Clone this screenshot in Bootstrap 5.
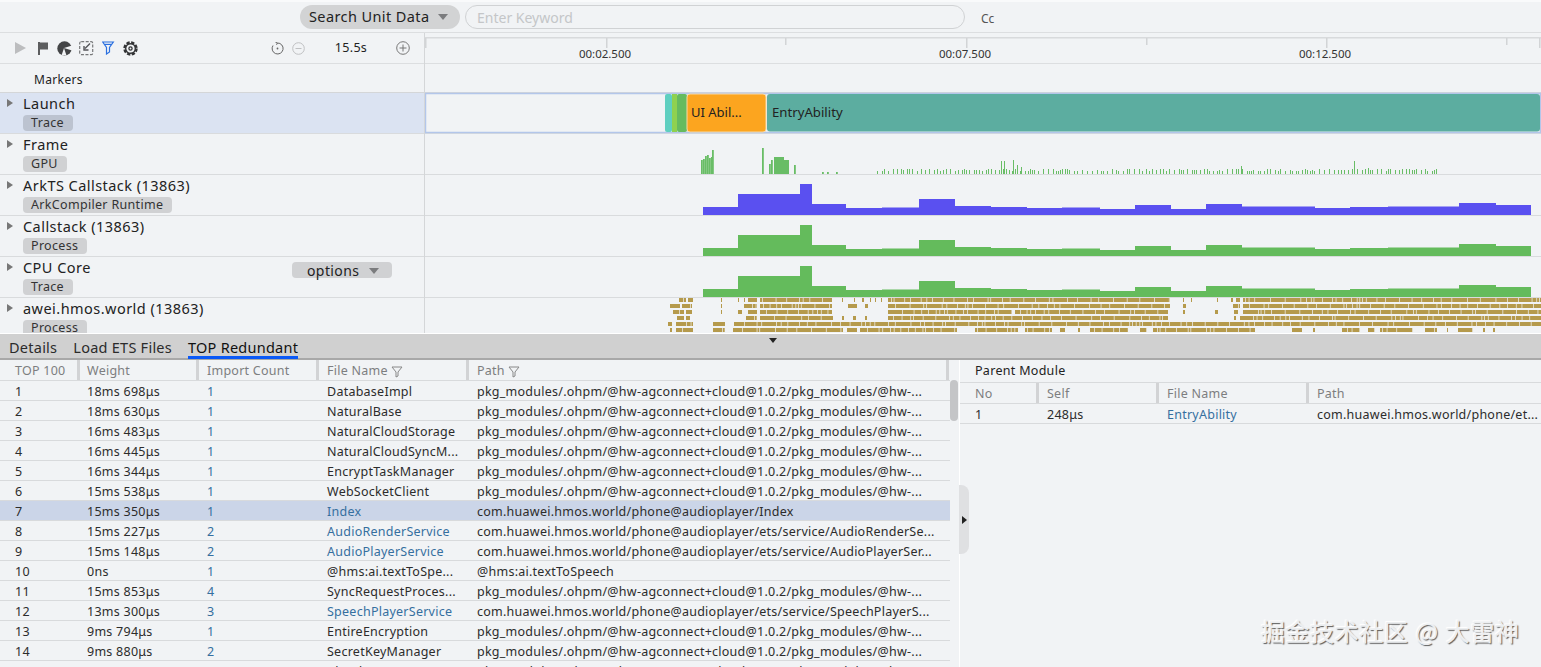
<!DOCTYPE html>
<html lang="en">
<head>
    <meta charset="UTF-8">
    <title>Launch - TOP Redundant</title>
    <link href="https://cdn.jsdelivr.net/npm/bootstrap@5.3.2/dist/css/bootstrap.min.css" rel="stylesheet">
    <style>
        html, body { height: 100%; overflow: hidden; }
        body {
            background: #f1f3f5;
            color: #222;
            font-family: "Noto Sans", "Liberation Sans", sans-serif;
            font-size: 13px;
            width: 1541px;
            height: 667px;
            position: relative;
        }
        .search-bar { height: 33px; border-top: 2px solid #f9fafb; border-bottom: 1px solid #dcdee0; padding-left: 300px; padding-top: 3px; }
        .search-type { width: 160px; height: 24px; background: #d2d3d4; border-radius: 12px; font-size: 14.5px; padding-left: 9px; letter-spacing: .4px; }
        .search-input { width: 500px; height: 24px; margin-left: 5px; border: 1px solid #d0d2d4; border-radius: 12px; padding-left: 11px; color: #c4c6c8; font-size: 14px; }
        .search-cc { margin-left: 16px; color: #555; font-size: 12px; }
        .caret-down { width: 0; height: 0; border-left: 5px solid transparent; border-right: 5px solid transparent; border-top: 6px solid #7b7c7e; }
        .top-area { height: 300px; overflow: hidden; }
        .left-col { width: 425px; flex: none; border-right: 1px solid #d4d6d8; }
        .tool-row { height: 31px; border-bottom: 1px solid #dcdee0; padding-left: 15px; }
        .tool-row svg { display: block; flex: none; }
        .tool-right { padding-right: 14px; }
        .zoom-val { width: 64px; text-align: center; font-size: 12.5px; margin-left: 14px; margin-right: 13px; letter-spacing: .3px; }
        .marker-row { height: 29px; border-bottom: 1px solid #d4d6d8; padding-left: 34px; font-size: 12px; padding-top: 7px; letter-spacing: .35px; }
        .lane { height: 41px; border-bottom: 1px solid #d9dbdd; padding-left: 23px; position: relative; line-height: 18px; }
        .lane-active { background: #dbe3f2; }
        .lane-arrow { position: absolute; left: 7px; top: 6px; width: 0; height: 0; border-top: 4.5px solid transparent; border-bottom: 4.5px solid transparent; border-left: 6px solid #777; }
        .lane-name { font-size: 14.5px; padding-top: 1px; letter-spacing: .46px; height: 22px; line-height: 18px; }
        .lane-tag { display: block; width: fit-content; background: #d0d1d3; border-radius: 4px; font-size: 12.5px; line-height: 16px; padding: 0 9px 0 8px; letter-spacing: .32px; color: #333; }
        .lane-active .lane-tag { background: #bcc3d0; }
        .lane-options { position: absolute; left: 292px; top: 5px; width: 100px; height: 16px; background: #d0d1d3; border-radius: 4px; font-size: 14px; line-height: 16px; padding-left: 15px; padding-top: 1px; letter-spacing: .4px; }
        .lane-options .caret-down { margin-left: 10px; }
        .chart-col { width: 1116px; flex: none; position: relative; }
        .chart-col svg { display: block; }
        .tab-bar { height: 27px; background: #d0d0d0; border-top: 1px solid #fff; border-bottom: 2px solid #a8a8a8; position: relative; padding-left: 9px; font-size: 14.5px; letter-spacing: .25px; }
        .tab-item { height: 25px; line-height: 27px; margin-right: 16px; color: #2b2b2b; }
        .tab-on { border-bottom: 3px solid #0a59f7; color: #111; }
        .drag-handle { position: absolute; left: 769px; top: 4px; width: 0; height: 0; border-left: 4px solid transparent; border-right: 4px solid transparent; border-top: 5px solid #222; }
        .bottom-area { height: 307px; overflow: hidden; position: relative; }
        .pane-left { width: 959px; flex: none; position: relative; overflow: hidden; }
        .pane-table { width: 950px; }
        .pane-right { flex: 1; border-left: 1px solid #fff; }
        .head-row, .data-row { display: flex; font-size: 12.5px; letter-spacing: .25px; }
        .head-row { height: 21px; line-height: 21px; color: #7d7e80; border-bottom: 1px solid #d8dadc; }
        .head-cell { border-right: 3px solid #d2d3d5; padding-left: 8px; height: 20px; white-space: nowrap; flex: none; }
        .head-no { width: 80px; padding-left: 15px; }
        .head-weight { width: 119px; padding-left: 7px; }
        .head-count { width: 120px; }
        .head-file { width: 150px; }
        .head-path { width: 480px; }
        .data-row { height: 20px; line-height: 19px; border-bottom: 1px solid #d8dadc; color: #2c2c2c; }
        .data-row > div { white-space: nowrap; overflow: hidden; padding-left: 15px; padding-top: 1px; flex: none; }
        .data-row-on { background: #cbd5e8; }
        .cell-no { width: 72px; }
        .cell-weight { width: 120px; }
        .cell-count { width: 120px; }
        .cell-file { width: 150px; }
        .cell-path { width: 473px; }
        .link-blue, .data-row > .link-blue { color: #356f9f; }
        .pane-scroll { position: absolute; left: 950px; top: 20px; width: 8px; height: 41px; background: #c4c5c7; border-radius: 4px; }
        .collapse-tab { position: absolute; left: 959px; top: 125px; width: 10px; height: 69px; background: #dfe0e2; border-radius: 0 8px 8px 0; }
        .collapse-arrow { position: absolute; left: 3px; top: 31px; width: 0; height: 0; border-top: 4px solid transparent; border-bottom: 4px solid transparent; border-left: 5px solid #222; }
        .parent-title { height: 23px; padding-left: 15px; line-height: 21px; font-size: 12.5px; letter-spacing: .3px; border-bottom: 1px solid #d8dadc; }
        .sub-head-no { width: 79px; padding-left: 15px; }
        .sub-head-self { width: 120px; }
        .sub-head-file { width: 150px; }
        .sub-head-path { width: 232px; border-right: 0; }
        .sub-no { width: 72px; }
        .sub-self { width: 120px; }
        .sub-file { width: 150px; }
        .sub-path { width: 239px; }
        .watermark { position: absolute; left: 1261px; top: 613px; color: #eceef0; font-family: "Noto Sans CJK SC", "Noto Sans", sans-serif; font-size: 24px; letter-spacing: .6px; word-spacing: 1px; text-shadow: -1px -1px 1px #fff, 1px 1px 1px #5a5a5a; white-space: nowrap; }
    </style>
</head>
<body>
    <div class="search-bar d-flex align-items-start">
        <div class="search-type d-flex align-items-center justify-content-between pe-2">
            <span>Search Unit Data</span><span class="caret-down me-1"></span>
        </div>
        <div class="search-input d-flex align-items-center">Enter Keyword</div>
        <div class="search-cc align-self-center">Cc</div>
    </div>

    <div class="top-area d-flex">
        <div class="left-col">
            <div class="tool-row d-flex align-items-center">
                <svg width="23" height="12" viewBox="0 0 23 12"><path d="M0 0 L11 6 L0 12 Z" fill="#bcbdbf"/></svg>
                <svg width="19" height="13" viewBox="0 0 19 13"><path d="M0 0 H2 V13 H0 Z M2 .5 H10 V7.5 H2 Z" fill="#5c5d5f"/></svg>
                <svg width="22" height="15" viewBox="0 0 22 15"><circle cx="7.5" cy="7.5" r="7.2" fill="#434446"/><path d="M7 7 L15 4.5 V9.5 Z M7 7 L4.5 14.5 H9.5 Z" fill="#f1f3f5"/></svg>
                <svg width="23" height="15" viewBox="0 0 23 15" fill="none" stroke="#77787a" stroke-width="1.2"><rect x=".7" y=".7" width="13" height="13" rx="1.5" stroke-dasharray="3 1.5"/><path d="M11 2.5 L6 7.5 M5 5 V9 H9.5" stroke="#55565a" stroke-width="1.4"/></svg>
                <svg width="21" height="14" viewBox="0 0 21 14" fill="none" stroke="#2b70e0" stroke-width="1.2"><path d="M.7 1 H11.3 L7.5 6.5 V11 L4.5 13 V6.5 Z"/><path d="M2.8 3.4 H9.2"/></svg>
                <svg width="15" height="15" viewBox="0 0 15 15" fill="none"><circle cx="7.5" cy="7.5" r="6" stroke="#333436" stroke-width="2.4" stroke-dasharray="3.2 1.5"/><circle cx="7.5" cy="7.5" r="4.8" stroke="#333436" stroke-width="1.4"/><circle cx="7.5" cy="7.5" r="1.6" stroke="#333436" stroke-width="1.3"/></svg>
                <div class="ms-auto d-flex align-items-center tool-right">
                    <svg width="13" height="13" viewBox="0 0 13 13" class="me-2" fill="none" stroke="#666" stroke-width="1"><path d="M6.5 1 A5.5 5.5 0 1 1 2 3.5"/><path d="M4.5 .3 L6.5 1 L5.5 2.8"/><circle cx="6.5" cy="6.5" r=".9" fill="#666" stroke="none"/></svg>
                    <svg width="13" height="13" viewBox="0 0 13 13" fill="none" stroke="#bfc0c2" stroke-width="1"><circle cx="6.5" cy="6.5" r="5.8"/><path d="M3.5 6.5 H9.5"/></svg>
                    <div class="zoom-val">15.5s</div>
                    <svg width="14" height="14" viewBox="0 0 14 14" fill="none" stroke="#777" stroke-width="1"><circle cx="7" cy="7" r="6.3"/><path d="M3.5 7 H10.5 M7 3.5 V10.5"/></svg>
                </div>
            </div>
            <div class="marker-row">Markers</div>
            <div class="lane lane-active"><span class="lane-arrow"></span><div class="lane-name">Launch</div><span class="lane-tag">Trace</span></div>
            <div class="lane"><span class="lane-arrow"></span><div class="lane-name">Frame</div><span class="lane-tag">GPU</span></div>
            <div class="lane"><span class="lane-arrow"></span><div class="lane-name">ArkTS Callstack (13863)</div><span class="lane-tag">ArkCompiler Runtime</span></div>
            <div class="lane"><span class="lane-arrow"></span><div class="lane-name">Callstack (13863)</div><span class="lane-tag">Process</span></div>
            <div class="lane"><span class="lane-arrow"></span><div class="lane-name">CPU Core</div><span class="lane-tag">Trace</span>
                <div class="lane-options d-flex align-items-center">options<span class="caret-down"></span></div>
            </div>
            <div class="lane"><span class="lane-arrow"></span><div class="lane-name">awei.hmos.world (13863)</div><span class="lane-tag">Process</span></div>
        </div>
        <div class="chart-col">
            <svg id="charts" width="1116" height="300" viewBox="425 33 1116 300"></svg>
        </div>
    </div>

    <div class="tab-bar d-flex">
        <div class="tab-item">Details</div>
        <div class="tab-item">Load ETS Files</div>
        <div class="tab-item tab-on">TOP Redundant</div>
        <span class="drag-handle"></span>
    </div>

    <div class="bottom-area d-flex">
        <div class="pane-left">
            <div class="pane-table">
                <div class="head-row">
                    <div class="head-cell head-no">TOP 100</div>
                    <div class="head-cell head-weight">Weight</div>
                    <div class="head-cell head-count">Import Count</div>
                    <div class="head-cell head-file">File Name <svg width="12" height="12" viewBox="0 0 12 12" fill="none" stroke="#888"><path d="M1 1 H11 L7 6 V10 L5 11 V6 Z"/></svg></div>
                    <div class="head-cell head-path">Path <svg width="12" height="12" viewBox="0 0 12 12" fill="none" stroke="#888"><path d="M1 1 H11 L7 6 V10 L5 11 V6 Z"/></svg></div>
                </div>
                <div id="topRows"></div>
            </div>
            <div class="pane-scroll"></div>
        </div>
        <div class="collapse-tab"><span class="collapse-arrow"></span></div>
        <div class="pane-right">
            <div class="parent-title">Parent Module</div>
            <div class="head-row">
                <div class="head-cell sub-head-no">No</div>
                <div class="head-cell sub-head-self">Self</div>
                <div class="head-cell sub-head-file">File Name</div>
                <div class="head-cell sub-head-path">Path</div>
            </div>
            <div class="data-row">
                <div class="sub-no">1</div>
                <div class="sub-self">248μs</div>
                <div class="sub-file link-blue">EntryAbility</div>
                <div class="sub-path">com.huawei.hmos.world/phone/et...</div>
            </div>
        </div>
    </div>

    <div class="watermark">掘金技术社区 @ 大雷神</div>

    <script>
    // tabela TOP Redundant
    const pkg = 'pkg_modules/.ohpm/@hw-agconnect+cloud@1.0.2/pkg_modules/@hw-...';
    const linhas = [
        [1, '18ms 698μs', 1, 'DatabaseImpl', pkg],
        [2, '18ms 630μs', 1, 'NaturalBase', pkg],
        [3, '16ms 483μs', 1, 'NaturalCloudStorage', pkg],
        [4, '16ms 445μs', 1, 'NaturalCloudSyncM...', pkg],
        [5, '16ms 344μs', 1, 'EncryptTaskManager', pkg],
        [6, '15ms 538μs', 1, 'WebSocketClient', pkg],
        [7, '15ms 350μs', 1, 'Index', 'com.huawei.hmos.world/phone@audioplayer/Index', 'on'],
        [8, '15ms 227μs', 2, 'AudioRenderService', 'com.huawei.hmos.world/phone@audioplayer/ets/service/AudioRenderSe...', 'link'],
        [9, '15ms 148μs', 2, 'AudioPlayerService', 'com.huawei.hmos.world/phone@audioplayer/ets/service/AudioPlayerSer...', 'link'],
        [10, '0ns', 1, '@hms:ai.textToSpe...', '@hms:ai.textToSpeech'],
        [11, '15ms 853μs', 4, 'SyncRequestProces...', pkg],
        [12, '13ms 300μs', 3, 'SpeechPlayerService', 'com.huawei.hmos.world/phone@audioplayer/ets/service/SpeechPlayerS...', 'link'],
        [13, '9ms 794μs', 1, 'EntireEncryption', pkg],
        [14, '9ms 880μs', 2, 'SecretKeyManager', pkg],
        [15, '9ms 120μs', 1, 'CloudDBManager', pkg]
    ];
    document.getElementById('topRows').innerHTML = linhas.map(l => {
        const azul = l[5] === 'on' || l[5] === 'link';
        return `<div class="data-row ${l[5] === 'on' ? 'data-row-on' : ''}">
            <div class="cell-no">${l[0]}</div>
            <div class="cell-weight">${l[1]}</div>
            <div class="cell-count link-blue">${l[2]}</div>
            <div class="cell-file ${azul ? 'link-blue' : ''}">${l[3]}</div>
            <div class="cell-path">${l[4]}</div>
        </div>`;
    }).join('');

    // gerador simples para os graficos
    let seed = 7;
    const rnd = () => (seed = (seed * 16807) % 2147483647) / 2147483647;
    let svg = '';
    const rect = (x, y, w, h, c, extra = '') => { svg += `<rect x="${x}" y="${y}" width="${w}" height="${h}" fill="${c}" ${extra}/>`; };

    // regua de tempo
    rect(425, 37, 1116, 1.5, '#d8dadc');
    [425, 606, 966, 1326, 1539].forEach(x => rect(x, 38, 1.5, 10, '#d2d4d6'));
    [785, 1146, 1506].forEach(x => rect(x, 38, 1.5, 7, '#d2d4d6'));
    [[605, '00:02.500'], [965, '00:07.500'], [1325, '00:12.500']].forEach(([x, t]) => {
        svg += `<text x="${x}" y="58" text-anchor="middle" font-size="11.5" fill="#333" font-family="Noto Sans">${t}</text>`;
    });
    rect(425, 63, 1116, 1, '#dcdee0');
    rect(425, 92, 1116, 1, '#d4d6d8');

    // linhas das pistas
    [133, 174, 215, 256, 297].forEach(y => rect(425, y, 1116, 1, '#d9dbdd'));

    // Launch
    rect(425.5, 93.5, 1115, 39, '#f1f3f5', 'stroke="#b3c6ea" stroke-width="1.5"');
    rect(665, 94, 7, 38, '#5fcfc0', 'rx="2"');
    rect(672, 94, 5, 38, '#8fd14f');
    rect(677, 94, 10, 38, '#66bb5f', 'rx="2"');
    rect(687, 94, 79, 38, '#fca51f', 'rx="3" stroke="#f6d9a8" stroke-width="1"');
    rect(767, 94, 773, 37.5, '#5cada0', 'rx="3"');
    svg += `<text x="691" y="116.5" font-size="13" fill="#222" font-family="Noto Sans">UI Abil...</text>`;
    svg += `<text x="772" y="116.5" font-size="13.2" fill="#222" font-family="Noto Sans">EntryAbility</text>`;

    // Frame
    const verde = '#69bd66';
    [[701,14],[703,15],[705,18],[707,19],[709,16],[711,17],[712,24],[762,26],[769,10],[771,14],[794,9],[822,2],[827,2],[836,2]].forEach(([x, h]) => rect(x, 174 - h, 1.8, h, verde));
    rect(774, 157, 10, 17, verde);
    rect(784, 160, 5, 14, verde);
    for (let x = 877; x < 1441; x += 2 + Math.floor(rnd() * 4)) {
        const h = 3 + Math.floor(rnd() * 3);
        rect(x, 174 - h, 1, h, verde);
    }
    [[1001,13],[1004,13],[1013,14],[1017,9],[1021,7],[1241,8],[1354,13],[1368,6]].forEach(([x, h]) => rect(x, 174 - h, 1, h, verde));

    // degraus de carga, alturas acima da base da pista
    const degraus = [[703,8],[738,21],[800,31],[812,11],[846,7],[882,7.5],[919,16],[955,9],[991,8],[1027,7],[1062,7.5],[1100,6],[1135,10],[1171,6],[1206,11],[1242,8.5],[1315,7],[1350,8],[1388,8.5],[1459,12],[1496,10]];
    const perfil = base => {
        let d = `M703 ${base}`;
        degraus.forEach(([x, h], i) => { d += ` L${x} ${base - h} H${i === degraus.length - 1 ? 1531 : degraus[i + 1][0]}`; });
        return d + ` L1531 ${base} Z`;
    };
    svg += `<path d="${perfil(215)}" fill="#5a50f0"/>`;
    svg += `<path d="${perfil(256)}" fill="#64bb5c"/>`;
    svg += `<path d="${perfil(297)}" fill="#64bb5c"/>`;

    // threads do processo, seis faixas douradas [inicio, fim]
    const ouro = [
        [[679,686],[688,693],[721,722],[738,739],[744,745],[748,757],[760,832],[842,843],[854,855],[862,864],[870,871],[875,876],[881,882],[888,1170],[1183,1184],[1191,1192],[1217,1218],[1231,1233],[1236,1240],[1243,1541]],
        [[670,680],[682,692],[721,722],[744,757],[760,832],[848,857],[865,868],[888,1170],[1183,1186],[1233,1240],[1243,1541]],
        [[673,684],[686,692],[721,722],[738,742],[748,757],[760,832],[888,1012],[1015,1168],[1183,1185],[1215,1218],[1234,1238],[1243,1541]],
        [[677,684],[686,690],[746,757],[760,833],[842,844],[853,856],[865,867],[888,1168],[1234,1236],[1240,1541]],
        [[668,672],[676,693],[713,725],[734,1541]],
        [[670,672],[676,693],[713,725],[733,843],[847,857],[860,957],[975,1018],[1025,1052],[1060,1065],[1078,1080],[1090,1128],[1140,1147],[1153,1255],[1292,1302],[1313,1315],[1342,1360],[1368,1375],[1380,1413],[1425,1437],[1447,1448],[1458,1473],[1483,1485],[1493,1495]]
    ];
    ouro.forEach((faixas, i) => {
        const y = 298 + i * 6;
        faixas.forEach(([a, b]) => {
            let x = a;
            while (x < b) {
                const larg = Math.min(2 + Math.floor(rnd() * 14), b - x);
                rect(x, y, larg, 4, '#b59a4c');
                x += larg + .7;
            }
        });
    });
    document.getElementById('charts').innerHTML = svg;
    </script>
    <script src="https://cdn.jsdelivr.net/npm/bootstrap@5.3.2/dist/js/bootstrap.bundle.min.js"></script>
</body>
</html>
